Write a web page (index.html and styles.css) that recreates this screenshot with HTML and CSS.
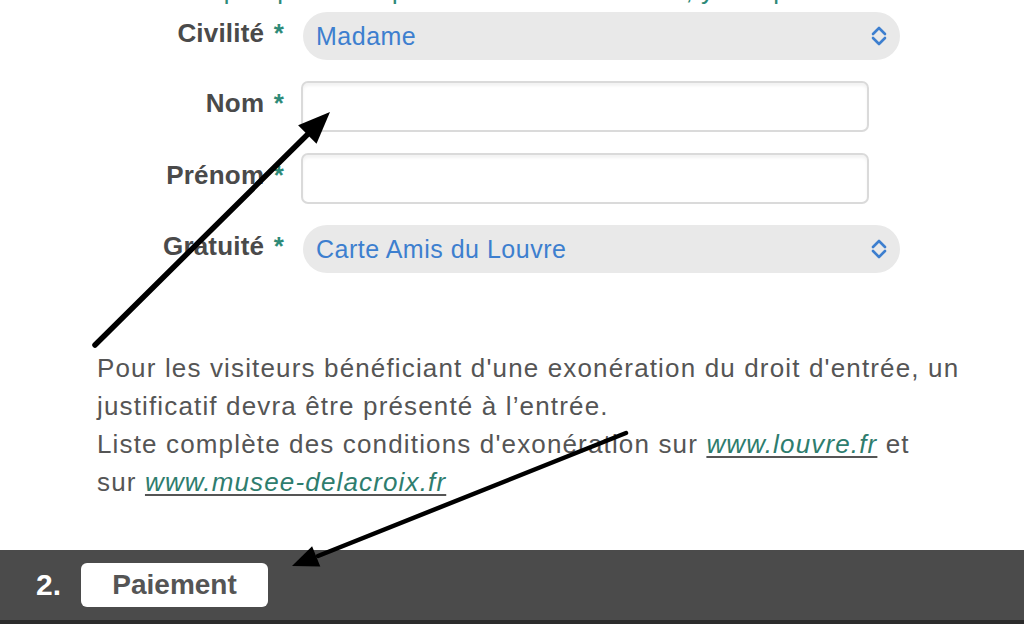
FILE: index.html
```html
<!DOCTYPE html>
<html lang="fr">
<head>
<meta charset="utf-8">
<title>Billetterie - Visiteur</title>
<link rel="stylesheet" href="styles.css">
</head>
<body>
<div class="page">
  <div class="intro"><span>Veuillez indiquer pour chaque visiteur ses données, y compris</span></div>

  <form class="form">
    <label class="label">Civilité <span class="req">*</span></label>
    <div class="field">
      <div class="select">
        <span class="value">Madame</span>
        <svg class="chev" width="16" height="22" viewBox="0 0 16 22"><path d="M2 9 L8 3 L14 9 M2 13 L8 19 L14 13" fill="none" stroke="#3d7fcf" stroke-width="2.6" stroke-linecap="round" stroke-linejoin="round"/></svg>
      </div>
    </div>

    <label class="label">Nom <span class="req">*</span></label>
    <div class="field"><div class="input"></div></div>

    <label class="label">Prénom <span class="req">*</span></label>
    <div class="field"><div class="input"></div></div>

    <label class="label">Gratuité <span class="req">*</span></label>
    <div class="field">
      <div class="select">
        <span class="value">Carte Amis du Louvre</span>
        <svg class="chev" width="16" height="22" viewBox="0 0 16 22"><path d="M2 9 L8 3 L14 9 M2 13 L8 19 L14 13" fill="none" stroke="#3d7fcf" stroke-width="2.6" stroke-linecap="round" stroke-linejoin="round"/></svg>
      </div>
    </div>
  </form>

  <p class="note">Pour les visiteurs bénéficiant d'une exonération du droit d'entrée, un justificatif devra être présenté à l’entrée.<br>Liste complète des conditions d'exonération sur <a href="#">www.louvre.fr</a> et<br>sur <a href="#">www.musee-delacroix.fr</a></p>

  <div class="step">
    <span class="num">2.</span>
    <span class="step-btn">Paiement</span>
  </div>

  <svg class="arrows" width="1024" height="643" viewBox="0 0 1024 643">
    <line x1="95" y1="345" x2="309" y2="133" stroke="#000" stroke-width="5.5" stroke-linecap="round"/>
    <polygon points="330,112 316.5,143.7 298.1,125.3" fill="#000"/>
    <line x1="626" y1="433" x2="318" y2="556" stroke="#000" stroke-width="4.5" stroke-linecap="round"/>
    <polygon points="292,566 320.3,566.6 312.1,546.2" fill="#000"/>
  </svg>
</div>
</body>
</html>
```

FILE: styles.css
```css
* { box-sizing: border-box; }
html, body {
  margin: 0;
  padding: 0;
  background: #fff;
}
body {
  font-family: "Liberation Sans", Arial, sans-serif;
  width: 1024px;
  height: 643px;
  overflow: hidden;
}
.page {
  position: relative;
  width: 1024px;
  height: 643px;
}
.intro {
  height: 4px;
  overflow: hidden;
  display: flex;
  align-items: flex-end;
  padding-left: 70px;
  color: #2e8a78;
  font-size: 26px;
  line-height: 28px;
  letter-spacing: 0.6px;
  white-space: nowrap;
}
.form {
  margin: 8px 0 0 0;
  display: grid;
  grid-template-columns: 290px 600px;
  row-gap: 21px;
  align-items: center;
}
.label {
  text-align: right;
  padding-right: 6px;
  font-size: 26px;
  font-weight: bold;
  letter-spacing: 0.2px;
  color: #4a4a4a;
  white-space: nowrap;
  position: relative;
  top: -3px;
}
.req {
  color: #2e8a78;
  font-weight: bold;
  margin-left: 2px;
}
.field {
  padding-left: 11px;
}
.select {
  margin-left: 2px;
  width: 597px;
  height: 48px;
  border-radius: 24px;
  background: #e9e9e9;
  display: flex;
  align-items: center;
  justify-content: space-between;
  padding: 0 13px 0 13px;
}
.value {
  color: #3d7fcf;
  font-size: 25px;
  letter-spacing: 0.5px;
}
.input {
  width: 568px;
  height: 51px;
  border: 2px solid #dadada;
  border-radius: 7px;
  background: #fff;
  box-shadow: inset 0 3px 3px rgba(0,0,0,0.05);
}
.note {
  margin: 76px 0 0 97px;
  width: 900px;
  font-size: 26px;
  letter-spacing: 1.15px;
  line-height: 38px;
  color: #555;
}
.note a {
  color: #2e7d6e;
  font-style: italic;
  text-decoration: underline;
  text-decoration-color: #555;
  text-underline-offset: 3px;
}
.step {
  margin-top: 49px;
  height: 74px;
  background: #4b4b4b;
  border-bottom: 4px solid #2b2b2b;
  display: flex;
  align-items: center;
  padding-left: 36px;
  gap: 20px;
}
.num {
  color: #fff;
  font-size: 30px;
  font-weight: bold;
}
.step-btn {
  width: 187px;
  height: 44px;
  background: #fff;
  border-radius: 6px;
  display: flex;
  align-items: center;
  justify-content: center;
  font-size: 28px;
  font-weight: bold;
  color: #555;
}
.arrows {
  position: absolute;
  left: 0;
  top: 0;
  pointer-events: none;
}
```
